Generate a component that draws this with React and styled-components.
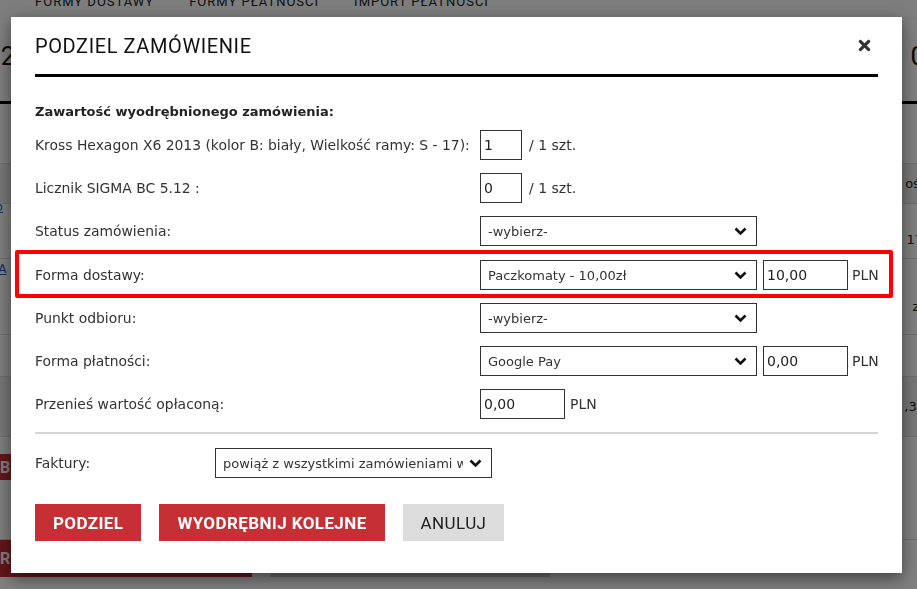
import styled, { createGlobalStyle } from "styled-components";
import { FaTimes } from "react-icons/fa";

const GlobalStyle = createGlobalStyle`
  * { box-sizing: border-box; }
  html, body { margin: 0; padding: 0; }
  body {
    width: 917px;
    height: 589px;
    overflow: hidden;
    font-family: "DejaVu Sans", Verdana, sans-serif;
    color: #333;
    background: #fff;
  }
`;

/* ---------- page behind the dialog ---------- */

const Page = styled.div`
  width: 917px;
  height: 589px;
  overflow: hidden;
`;

const Tabs = styled.div`
  display: flex;
  gap: 35px;
  margin-top: -8px;
  padding-left: 35px;
  height: 28px;
  line-height: 20px;
  font-family: Roboto, "Liberation Sans", sans-serif;
  font-size: 13px;
  letter-spacing: 1px;
  color: #222;
  background: #fafafa;
`;

const Totals = styled.div`
  display: flex;
  justify-content: space-between;
  align-items: flex-end;
  height: 84px;
  padding-bottom: 10px;
  border-bottom: 3px solid #000;
  font-family: Roboto, "Liberation Sans", sans-serif;
  font-size: 26px;
  color: #111;
`;

const TableRow = styled.div`
  display: flex;
  justify-content: space-between;
  align-items: center;
  height: ${(p) => p.h}px;
  background: ${(p) => (p.shade ? "#efefef" : "#fff")};
  border-bottom: ${(p) => (p.line ? "1px solid #ddd" : "0")};
  font-size: 13px;
  color: #222;
`;

const Link = styled.a`
  display: flex;
  flex-direction: column;
  align-self: ${(p) => (p.top ? "flex-start" : "center")};
  margin-top: ${(p) => (p.top ? -3 : 0)}px;
  margin-left: -12px;
  color: #1f5fbf;
  text-decoration: underline;
  font-size: 12px;
  line-height: 13px;
`;

const EdgeText = styled.span`
  margin-right: ${(p) => p.r || 0}px;
  margin-left: ${(p) => p.l || 0}px;
  align-self: ${(p) => (p.low ? "flex-end" : "center")};
  margin-bottom: ${(p) => (p.low ? 11 : 0)}px;
`;

const BgButtons = styled.div`
  display: flex;
  gap: 18px;
  height: ${(p) => p.h}px;
`;

const BgButton = styled.div`
  width: ${(p) => p.w}px;
  height: 100%;
  background: ${(p) => (p.red ? "#c62f33" : "#cfcfcf")};
  color: #fff;
  font-family: Roboto, "Liberation Sans", sans-serif;
  font-weight: 700;
  font-size: 16px;
  display: flex;
  align-items: center;
`;

/* ---------- overlay + dialog ---------- */

const Overlay = styled.div`
  position: fixed;
  inset: 0;
  background: rgba(0, 0, 0, 0.5);
`;

const Dialog = styled.div`
  position: fixed;
  left: 11px;
  top: 17px;
  width: 891px;
  height: 556px;
  padding: 0 24px;
  background: #fff;
  box-shadow: 0 5px 15px rgba(0, 0, 0, 0.5);
`;

const Header = styled.div`
  display: flex;
  justify-content: space-between;
  align-items: center;
  height: 60px;
  border-bottom: 3px solid #000;
`;

const Title = styled.h2`
  margin: 0;
  font-family: Roboto, "Liberation Sans", sans-serif;
  font-weight: 400;
  font-size: 20px;
  letter-spacing: 0.6px;
  color: #111;
`;

const Close = styled.button`
  border: 0;
  background: none;
  padding: 0;
  margin-right: 5px;
  display: flex;
  color: #333;
  cursor: pointer;
`;

const Body = styled.div`
  padding-top: 24px;
  font-size: 14px;
`;

const SectionTitle = styled.div`
  font-weight: 700;
  font-size: 13px;
  line-height: 22px;
  margin-bottom: 7px;
  color: #222;
`;

const Row = styled.div`
  display: grid;
  grid-template-columns: ${(p) => p.label || 445}px 1fr;
  align-items: center;
  height: 30px;
  margin-bottom: ${(p) => (p.flat ? 0 : 13)}px;
`;

const Highlight = styled.div`
  margin: -9px -15px 5px -20px;
  padding: 6px 11px 4px 16px;
  border: 4px solid #ff0000;
  border-radius: 2px;
`;

const Label = styled.span`
  color: #333;
  white-space: nowrap;
  font-size: 13.9px;
`;

const Controls = styled.div`
  display: flex;
  align-items: center;
  height: 30px;
`;

const Input = styled.input`
  width: ${(p) => p.w}px;
  height: 30px;
  margin-right: ${(p) => p.gap || 5}px;
  padding: 0 3px;
  border: 1px solid #333;
  border-radius: 0;
  font-family: "DejaVu Sans", Verdana, sans-serif;
  font-size: 14px;
  color: #222;
  outline: none;
`;

const SelectBox = styled.div`
  display: flex;
  align-items: center;
  justify-content: space-between;
  width: 277px;
  height: 30px;
  margin-right: 6px;
  padding: 0 9px 0 7px;
  border: 1px solid #333;
  font-size: 13px;
  color: #333;
  white-space: nowrap;
  overflow: hidden;
`;

const SelectText = styled.span`
  overflow: hidden;
  flex: 1;
  margin-right: 6px;
`;

const Unit = styled.span`
  color: #333;
  font-size: 14px;
`;

const Divider = styled.hr`
  margin: 2px 0 14px;
  border: 0;
  border-top: 2px solid #d5d5d5;
`;

const Actions = styled.div`
  display: flex;
  gap: 18px;
  margin-top: 26px;
`;

const Button = styled.button`
  height: 37px;
  padding: 0 18px;
  border: 0;
  border-radius: 0;
  background: ${(p) => (p.secondary ? "#dcdcdc" : "#c62f33")};
  color: ${(p) => (p.secondary ? "#222" : "#fff")};
  font-family: Roboto, "Liberation Sans", sans-serif;
  font-weight: ${(p) => (p.secondary ? 400 : 700)};
  font-size: 17px;
  letter-spacing: 0.4px;
  cursor: pointer;
`;

const Chevron = () => (
  <svg width="13" height="9" viewBox="0 0 13 9">
    <polyline
      points="1.5,1.5 6.5,6.5 11.5,1.5"
      fill="none"
      stroke="#111"
      strokeWidth="2.6"
    />
  </svg>
);

const Select = ({ value }) => (
  <SelectBox>
    <SelectText>{value}</SelectText>
    <Chevron />
  </SelectBox>
);

const App = () => {
  return (
    <>
      <GlobalStyle />
      <Page>
        <Tabs>
          <span>FORMY DOSTAWY</span>
          <span>FORMY PŁATNOŚCI</span>
          <span>IMPORT PŁATNOŚCI</span>
        </Tabs>
        <Totals>
          <EdgeText l={-6}>.2</EdgeText>
          <EdgeText r={-8}>0</EdgeText>
        </Totals>
        <TableRow h={60} line />
        <TableRow h={40} shade line>
          <span />
          <EdgeText r={-10}>ość</EdgeText>
        </TableRow>
        <TableRow h={55} line>
          <Link top>
            <span>go</span>
            <span>ły</span>
          </Link>
          <EdgeText r={-6} low>17</EdgeText>
        </TableRow>
        <TableRow h={20}>
          <Link>MA</Link>
          <span />
        </TableRow>
        <TableRow h={56} line>
          <span />
          <EdgeText r={-6}>zł</EdgeText>
        </TableRow>
        <TableRow h={42} line />
        <TableRow h={60} shade line>
          <span />
          <EdgeText r={-8}>,37</EdgeText>
        </TableRow>
        <TableRow h={17} />
        <BgButtons h={26}>
          <BgButton red w={11}>B</BgButton>
        </BgButtons>
        <TableRow h={60} line />
        <BgButtons h={37}>
          <BgButton red w={252}>R</BgButton>
          <BgButton w={280} />
        </BgButtons>
      </Page>

      <Overlay />
      <Dialog>
        <Header>
          <Title>PODZIEL ZAMÓWIENIE</Title>
          <Close aria-label="Zamknij">
            <FaTimes size={17} />
          </Close>
        </Header>
        <Body>
          <SectionTitle>Zawartość wyodrębnionego zamówienia:</SectionTitle>

          <Row>
            <Label>Kross Hexagon X6 2013 (kolor B: biały, Wielkość ramy: S - 17):</Label>
            <Controls>
              <Input w={42} gap={7} defaultValue="1" />
              <Unit>/ 1 szt.</Unit>
            </Controls>
          </Row>

          <Row>
            <Label>Licznik SIGMA BC 5.12 :</Label>
            <Controls>
              <Input w={42} gap={7} defaultValue="0" />
              <Unit>/ 1 szt.</Unit>
            </Controls>
          </Row>

          <Row>
            <Label>Status zamówienia:</Label>
            <Controls>
              <Select value="-wybierz-" />
            </Controls>
          </Row>

          <Highlight>
            <Row flat>
              <Label>Forma dostawy:</Label>
              <Controls>
                <Select value="Paczkomaty - 10,00zł" />
                <Input w={85} gap={4} defaultValue="10,00" />
                <Unit>PLN</Unit>
              </Controls>
            </Row>
          </Highlight>

          <Row>
            <Label>Punkt odbioru:</Label>
            <Controls>
              <Select value="-wybierz-" />
            </Controls>
          </Row>

          <Row>
            <Label>Forma płatności:</Label>
            <Controls>
              <Select value="Google Pay" />
              <Input w={85} gap={4} defaultValue="0,00" />
              <Unit>PLN</Unit>
            </Controls>
          </Row>

          <Row>
            <Label>Przenieś wartość opłaconą:</Label>
            <Controls>
              <Input w={85} gap={5} defaultValue="0,00" />
              <Unit>PLN</Unit>
            </Controls>
          </Row>

          <Divider />

          <Row label={180} flat>
            <Label>Faktury:</Label>
            <Controls>
              <Select value="powiąż z wszystkimi zamówieniami w" />
            </Controls>
          </Row>

          <Actions>
            <Button>PODZIEL</Button>
            <Button>WYODRĘBNIJ KOLEJNE</Button>
            <Button secondary>ANULUJ</Button>
          </Actions>
        </Body>
      </Dialog>
    </>
  );
};

export default App;
